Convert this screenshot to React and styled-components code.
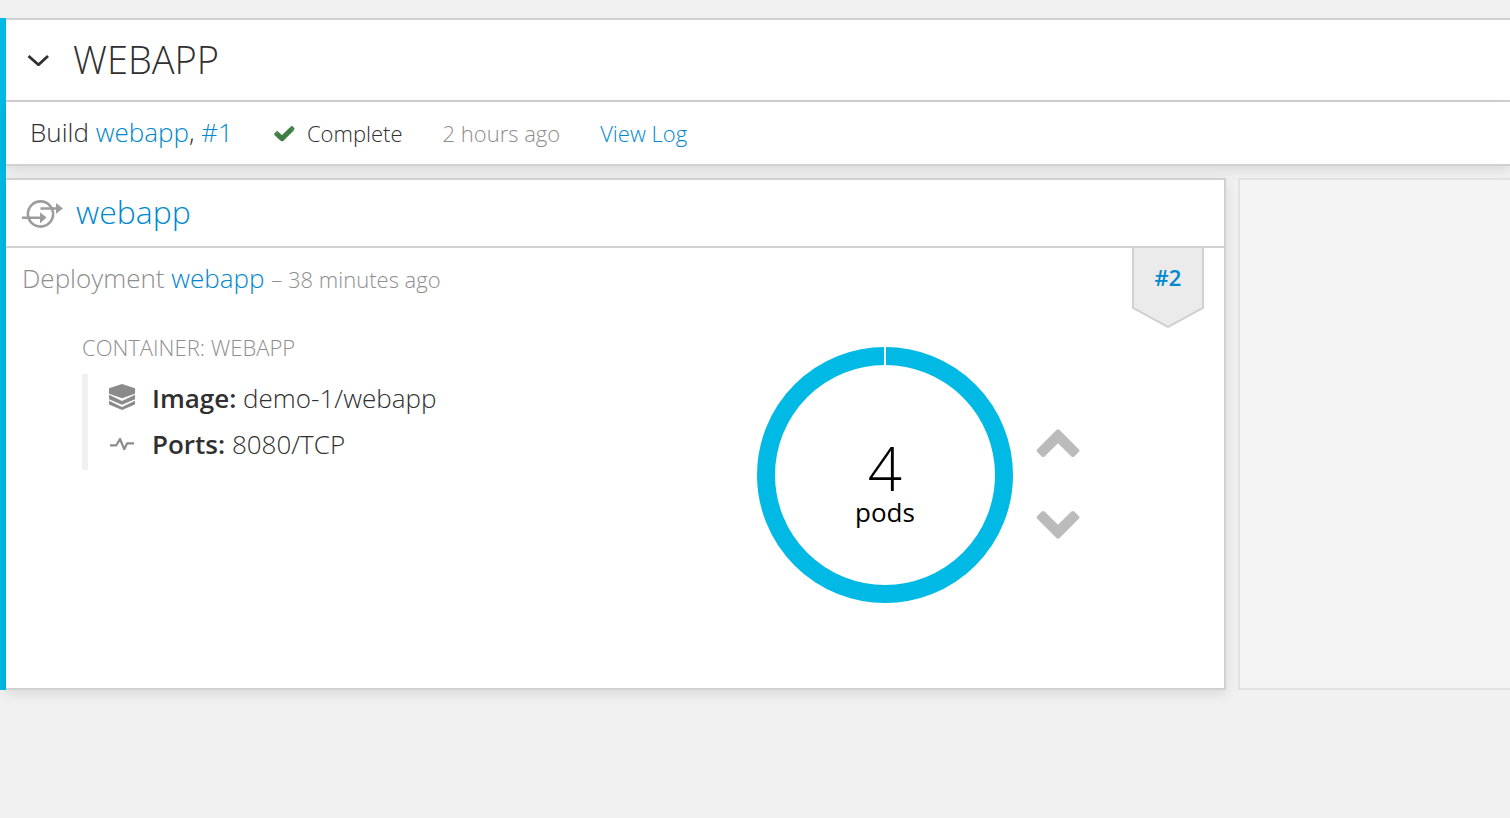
import React from "react";
import styled, { createGlobalStyle } from "styled-components";

const GlobalStyle = createGlobalStyle`
  *, *::before, *::after { box-sizing: border-box; }
  body {
    margin: 0;
    background: #f1f1f1;
    color: #303030;
    font-family: "Open Sans", "Liberation Sans", sans-serif;
    font-size: 26px;
    font-weight: 300;
    line-height: 36px;
  }
  h2, h3, h4, p, ul { margin: 0; padding: 0; font-weight: inherit; }
`;

const Page = styled.main`
  padding: 18px 0 40px;
  overflow-x: hidden;
`;

const Service = styled.section`
  border-left: 6px solid #00b9e4;
`;

const ServiceHeader = styled.header`
  display: flex;
  align-items: center;
  gap: 24px;
  height: 84px;
  padding: 0 21px 2px;
  background: #fff;
  border-top: 2px solid #d1d1d1;
  border-bottom: 2px solid #d1d1d1;
`;

const ServiceName = styled.h2`
  font-size: 38px;
  line-height: 52px;
  text-transform: uppercase;
`;

const IconButton = styled.button`
  display: flex;
  padding: 0;
  border: 0;
  background: none;
  color: inherit;
  cursor: pointer;
`;

const Link = styled.a`
  color: #0088ce;
  font-weight: ${(p) => p.$weight || "inherit"};
  text-decoration: none;
  &:hover { text-decoration: underline; }
`;

const BuildRow = styled.div`
  display: flex;
  align-items: center;
  gap: 40px;
  height: 64px;
  padding: 0 24px 2px;
  background: #fff;
  border-bottom: 2px solid #d1d1d1;
  box-shadow: 0 4px 12px rgba(0, 0, 0, 0.1);
`;

const Small = styled.span`
  display: inline-flex;
  align-items: center;
  gap: 12px;
  padding-top: 2px;
  font-size: 22px;
  line-height: 32px;
  color: ${(p) => (p.$muted ? "#8e8e8e" : "inherit")};
`;

const Columns = styled.div`
  display: grid;
  grid-template-columns: minmax(0, 1220fr) minmax(0, 272fr);
  gap: 12px;
  margin-top: 12px;
`;

const Card = styled.article`
  min-height: 512px;
  background: #fff;
  border: 2px solid #d1d1d1;
  border-left: 0;
  box-shadow: 0 4px 12px rgba(0, 0, 0, 0.1);
`;

const EmptyPanel = styled.div`
  background: #f4f4f4;
  border: 2px solid #e2e2e2;
  border-right: 0;
`;

const CardHeader = styled.header`
  display: flex;
  align-items: center;
  gap: 12px;
  height: 68px;
  padding: 0 16px;
  border-bottom: 2px solid #d1d1d1;
`;

const CardTitle = styled.h3`
  padding-bottom: 2px;
  font-size: 32px;
  line-height: 46px;
`;

const CardBody = styled.div`
  position: relative;
`;

const DeploymentLine = styled.p`
  padding: 12px 16px 0;
  color: #8e8e8e;
`;

const Ribbon = styled.div`
  position: absolute;
  top: 0;
  right: 20px;
  display: grid;
  width: 72px;
  height: 80px;
  font-size: 22px;
  line-height: 58px;
  text-align: center;
  > * { grid-area: 1 / 1; }
`;

const Details = styled.div`
  display: grid;
  grid-template-columns: 1fr 1fr;
  padding: 36px 0;
`;

const ContainerInfo = styled.div`
  padding-left: 76px;
`;

const ContainerLabel = styled.h4`
  font-size: 22px;
  line-height: 30px;
  color: #8e8e8e;
  text-transform: uppercase;
`;

const Properties = styled.ul`
  margin-top: 12px;
  padding: 1px 0 3px 20px;
  border-left: 6px solid #f0f0f0;
  list-style: none;
`;

const Property = styled.li`
  display: flex;
  align-items: center;
  gap: 16px;
  height: 46px;
  b { font-weight: 600; }
`;

const Scaling = styled.div`
  display: flex;
  align-items: center;
  justify-content: center;
  gap: 23px;
  padding: 15px 2px 0 0;
`;

const Donut = styled.div`
  display: grid;
  place-items: center;
  > * { grid-area: 1 / 1; }
`;

const PodCount = styled.div`
  display: flex;
  flex-direction: column;
  align-items: center;
  padding-top: 22px;
  color: #000;
  font-weight: 400;
`;

const PodNumber = styled.span`
  font-size: 60px;
  font-weight: 300;
  line-height: 52px;
`;

const ScaleButtons = styled.div`
  display: flex;
  flex-direction: column;
  gap: 52px;
  padding-top: 18px;
`;

const ToggleIcon = () => (
  <svg width="22" height="14" viewBox="0 0 22 14" aria-hidden="true">
    <path d="M1.5 4 11.5 12.8 21 4" fill="none" stroke="currentColor" strokeWidth="2.8" />
  </svg>
);

const CheckIcon = () => (
  <svg width="22" height="18" viewBox="0 0 22 18" aria-hidden="true">
    <path d="M3.6 9.6 9 14.6 19 4.8" fill="none" stroke="#3f7d44" strokeWidth="5" strokeLinejoin="round" />
    <path d="M1.3 9.4 3.6 7.2Q4.4 6.6 5.3 7.7L1.9 11.4Q.6 10.2 1.3 9.4ZM17.2 3 18 2.2Q18.8 1.6 19.6 2.3L21.2 4Q22 4.8 21.2 5.6L20.7 6.6Z" fill="#3f7d44" />
  </svg>
);

const DeployIcon = () => (
  <svg width="42" height="30" viewBox="0 0 42 30" aria-hidden="true">
    <circle cx="18.5" cy="16" r="12.6" fill="none" stroke="#9c9c9c" strokeWidth="2.6" />
    <g fill="#9c9c9c">
      <path d="M18.5 9.2H34V5l7 5.4-7 5.4v-4H18.5Z" />
      <path d="M0 18.4h18v-4.2l6.6 5.4-6.6 5.6v-4.3H0Z" />
    </g>
  </svg>
);

const ImageIcon = () => (
  <svg width="28" height="28" viewBox="0 0 28 28" fill="#8b8b8b" aria-hidden="true">
    <path d="M14 0 27 4.3V9.8L14 14.3 1 9.8V4.3Z" />
    <path d="M1 10.8 14 17 27 10.8v4.4L14 20.8 1 15.2Z" />
    <path d="M1 16.8 14 22.9 27 16.8v3.6L14 26 1 20.4Z" />
  </svg>
);

const PortsIcon = () => (
  <svg width="28" height="16" viewBox="0 0 28 16" aria-hidden="true">
    <path d="M2 9.3H8.3L12 3 16.2 13.2 19.2 7.3H26" fill="none" stroke="#8b8b8b" strokeWidth="2.2" strokeLinejoin="round" />
  </svg>
);

const ChevronIcon = ({ down }) => (
  <svg width="44" height="29" viewBox="0 0 44 29" aria-hidden="true">
    <path
      transform={down ? "rotate(180 22 14.5)" : undefined}
      d="M20.4 1.1Q22-.4 23.6 1.1L42.8 20.2Q44 21.6 42.8 23L38.2 27.5Q36.8 28.7 35.4 27.5L22 14.2 8.6 27.5Q7.2 28.7 5.8 27.5L1.2 23Q0 21.6 1.2 20.2Z"
      fill="#bbb"
    />
  </svg>
);

const RingChart = () => (
  <svg width="256" height="256" viewBox="0 0 256 256" aria-hidden="true">
    <circle cx="128" cy="128" r="119" fill="none" stroke="#00b9e4" strokeWidth="18" />
    <path d="M128 0V19" stroke="#fff" strokeWidth="2" />
  </svg>
);

const RibbonShape = () => (
  <svg width="72" height="80" viewBox="0 0 72 80" aria-hidden="true">
    <path d="M1 0V60L36 79 71 60V0" fill="#ebebeb" stroke="#d1d1d1" strokeWidth="2" />
  </svg>
);

export default function App() {
  return (
    <Page>
      <GlobalStyle />
      <Service>
        <ServiceHeader>
          <IconButton type="button" aria-label="Collapse webapp" aria-expanded="true">
            <ToggleIcon />
          </IconButton>
          <ServiceName>webapp</ServiceName>
        </ServiceHeader>
        <BuildRow>
          <span>
            Build <Link href="#build">webapp</Link>, <Link href="#build-1">#1</Link>
          </span>
          <Small>
            <CheckIcon />
            Complete
          </Small>
          <Small $muted>2 hours ago</Small>
          <Small>
            <Link href="#log">View Log</Link>
          </Small>
        </BuildRow>
        <Columns>
          <Card>
            <CardHeader>
              <DeployIcon />
              <CardTitle>
                <Link href="#service">webapp</Link>
              </CardTitle>
            </CardHeader>
            <CardBody>
              <DeploymentLine>
                Deployment <Link href="#deployment">webapp</Link> <Small $muted>– 38 minutes ago</Small>
              </DeploymentLine>
              <Ribbon>
                <RibbonShape />
                <Link href="#deployment-2" $weight={600}>#2</Link>
              </Ribbon>
              <Details>
                <ContainerInfo>
                  <ContainerLabel>Container: webapp</ContainerLabel>
                  <Properties>
                    <Property>
                      <ImageIcon />
                      <span><b>Image:</b> demo-1/webapp</span>
                    </Property>
                    <Property>
                      <PortsIcon />
                      <span><b>Ports:</b> 8080/TCP</span>
                    </Property>
                  </Properties>
                </ContainerInfo>
                <Scaling>
                  <Donut>
                    <RingChart />
                    <PodCount>
                      <PodNumber>4</PodNumber>
                      <span>pods</span>
                    </PodCount>
                  </Donut>
                  <ScaleButtons>
                    <IconButton type="button" aria-label="Scale up">
                      <ChevronIcon />
                    </IconButton>
                    <IconButton type="button" aria-label="Scale down">
                      <ChevronIcon down />
                    </IconButton>
                  </ScaleButtons>
                </Scaling>
              </Details>
            </CardBody>
          </Card>
          <EmptyPanel />
        </Columns>
      </Service>
    </Page>
  );
}
